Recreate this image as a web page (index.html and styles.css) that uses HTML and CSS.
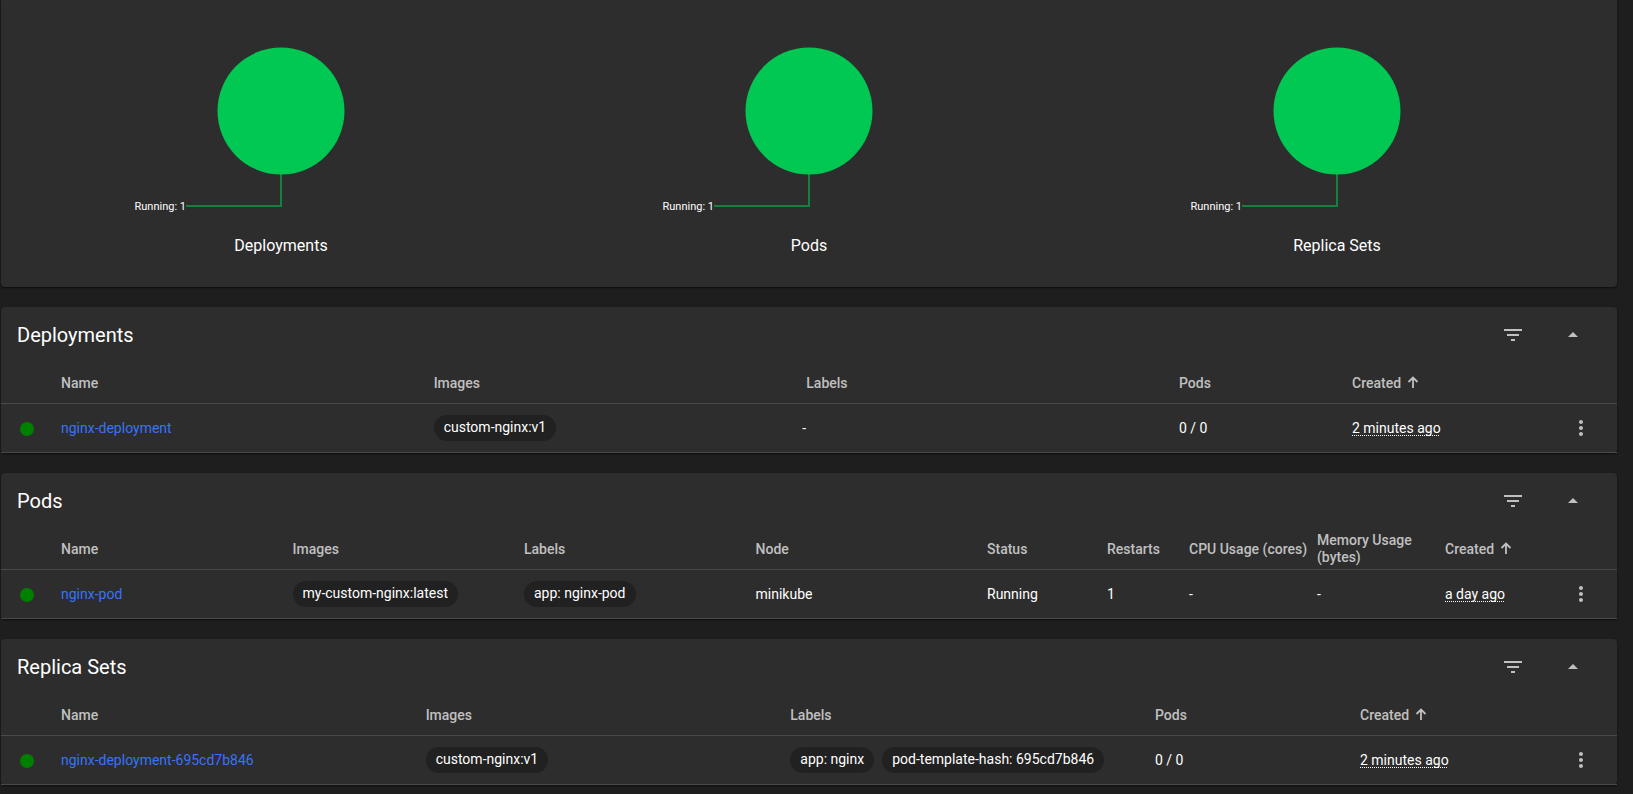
FILE: index.html
```html
<!DOCTYPE html>
<html lang="en">
<head>
<meta charset="utf-8">
<title>Workloads</title>
<link rel="stylesheet" href="styles.css">
</head>
<body>
<svg class="defs" aria-hidden="true">
  <symbol id="filter" viewBox="0 0 24 24"><path d="M10 18h4v-2h-4v2zM3 6v2h18V6H3zm3 7h12v-2H6v2z"/></symbol>
  <symbol id="up" viewBox="0 0 24 24"><path d="M7 14l5-5 5 5z"/></symbol>
  <symbol id="more" viewBox="0 0 24 24"><path d="M12 8c1.1 0 2-.9 2-2s-.9-2-2-2-2 .9-2 2 .9 2 2 2zm0 2c-1.1 0-2 .9-2 2s.9 2 2 2 2-.9 2-2-.9-2-2-2zm0 6c-1.1 0-2 .9-2 2s.9 2 2 2 2-.9 2-2-.9-2-2-2z"/></symbol>
  <symbol id="sort" viewBox="0 0 12 12"><path d="M6 12V2M1.500 6L6 1.500 10.500 6" fill="none" stroke="currentColor" stroke-width="1.800"/></symbol>
  <symbol id="dot" viewBox="0 0 24 24"><circle cx="12" cy="12" r="12"/></symbol>
  <symbol id="pie" viewBox="0 0 320 220">
    <path d="M160 170V206H65" fill="none" stroke="#16803f" stroke-width="2"/>
    <circle cx="160" cy="111" r="63.500" fill="#00c853"/>
  </symbol>
</svg>
<main class="page">
  <section class="card charts" aria-label="Workload status">
    <figure class="chart">
      <svg class="pie" viewBox="0 0 320 220"><use href="#pie"/><text x="65" y="210" text-anchor="end">Running: 1</text></svg>
      <figcaption>Deployments</figcaption>
    </figure>
    <figure class="chart">
      <svg class="pie" viewBox="0 0 320 220"><use href="#pie"/><text x="65" y="210" text-anchor="end">Running: 1</text></svg>
      <figcaption>Pods</figcaption>
    </figure>
    <figure class="chart">
      <svg class="pie" viewBox="0 0 320 220"><use href="#pie"/><text x="65" y="210" text-anchor="end">Running: 1</text></svg>
      <figcaption>Replica Sets</figcaption>
    </figure>
  </section>

  <section class="card">
    <header class="card-header">
      <h2>Deployments</h2>
      <button class="icon-button" aria-label="Filter deployments"><svg class="icon"><use href="#filter"/></svg></button>
      <button class="icon-button" aria-label="Collapse deployments"><svg class="icon"><use href="#up"/></svg></button>
    </header>
    <table class="deployments">
      <colgroup><col class="c-status"><col><col><col><col class="c-pods"><col class="c-created"><col class="c-actions"></colgroup>
      <thead><tr><th></th><th>Name</th><th>Images</th><th>Labels</th><th>Pods</th><th>Created <svg class="sort"><use href="#sort"/></svg></th><th></th></tr></thead>
      <tbody><tr>
        <td class="status"><svg class="dot"><use href="#dot"/></svg></td>
        <td><a href="#nginx-deployment">nginx-deployment</a></td>
        <td><div class="chips"><span class="chip">custom-nginx:v1</span></div></td>
        <td><div class="chips">-</div></td>
        <td>0 / 0</td>
        <td><span class="date">2 minutes ago</span></td>
        <td class="actions"><button class="menu-button" aria-label="Actions"><svg class="icon"><use href="#more"/></svg></button></td>
      </tr></tbody>
    </table>
  </section>

  <section class="card">
    <header class="card-header">
      <h2>Pods</h2>
      <button class="icon-button" aria-label="Filter pods"><svg class="icon"><use href="#filter"/></svg></button>
      <button class="icon-button" aria-label="Collapse pods"><svg class="icon"><use href="#up"/></svg></button>
    </header>
    <table class="pods">
      <colgroup><col class="c-status"><col><col><col><col><col class="c-phase"><col class="c-restarts"><col class="c-usage"><col class="c-usage"><col class="c-created"><col class="c-actions"></colgroup>
      <thead><tr><th></th><th>Name</th><th>Images</th><th>Labels</th><th>Node</th><th>Status</th><th>Restarts</th><th>CPU Usage (cores)</th><th>Memory Usage (bytes)</th><th>Created <svg class="sort"><use href="#sort"/></svg></th><th></th></tr></thead>
      <tbody><tr>
        <td class="status"><svg class="dot"><use href="#dot"/></svg></td>
        <td><a href="#nginx-pod">nginx-pod</a></td>
        <td><div class="chips"><span class="chip">my-custom-nginx:latest</span></div></td>
        <td><div class="chips"><span class="chip">app: nginx-pod</span></div></td>
        <td>minikube</td>
        <td>Running</td>
        <td>1</td>
        <td>-</td>
        <td>-</td>
        <td><span class="date">a day ago</span></td>
        <td class="actions"><button class="menu-button" aria-label="Actions"><svg class="icon"><use href="#more"/></svg></button></td>
      </tr></tbody>
    </table>
  </section>

  <section class="card">
    <header class="card-header">
      <h2>Replica Sets</h2>
      <button class="icon-button" aria-label="Filter replica sets"><svg class="icon"><use href="#filter"/></svg></button>
      <button class="icon-button" aria-label="Collapse replica sets"><svg class="icon"><use href="#up"/></svg></button>
    </header>
    <table class="replicas">
      <colgroup><col class="c-status"><col><col><col><col class="c-pods"><col class="c-created"><col class="c-actions"></colgroup>
      <thead><tr><th></th><th>Name</th><th>Images</th><th>Labels</th><th>Pods</th><th>Created <svg class="sort"><use href="#sort"/></svg></th><th></th></tr></thead>
      <tbody><tr>
        <td class="status"><svg class="dot"><use href="#dot"/></svg></td>
        <td><a href="#nginx-deployment-695cd7b846">nginx-deployment-695cd7b846</a></td>
        <td><div class="chips"><span class="chip">custom-nginx:v1</span></div></td>
        <td><div class="chips"><span class="chip">app: nginx</span><span class="chip">pod-template-hash: 695cd7b846</span></div></td>
        <td>0 / 0</td>
        <td><span class="date">2 minutes ago</span></td>
        <td class="actions"><button class="menu-button" aria-label="Actions"><svg class="icon"><use href="#more"/></svg></button></td>
      </tr></tbody>
    </table>
  </section>
</main>
</body>
</html>
```

FILE: styles.css
```css
* { box-sizing: border-box; }

body {
  margin: 0;
  background: #1e1e1e;
  color: #fff;
  font: 400 14px/17px Roboto, "Liberation Sans", sans-serif;
}

.defs { display: none; }

.page {
  display: flex;
  flex-direction: column;
  gap: 20px;
  padding: 0 16px 9px 1px;
}

.card {
  background: #2d2d2d;
  border-radius: 4px;
  box-shadow: 0 1px 2px rgba(0, 0, 0, .6);
}

.charts {
  display: grid;
  grid-template-columns: repeat(3, 1fr);
  padding: 0 16px 29px;
  border-radius: 0 0 4px 4px;
}

.chart {
  display: flex;
  flex-direction: column;
  align-items: center;
  gap: 14px;
  margin: 0;
}

.pie { width: 320px; height: 220px; }

.pie text {
  fill: #fff;
  font-size: 11px;
  font-weight: 400;
}

.chart figcaption {
  color: #fff;
  font-size: 16px;
  font-weight: 400;
  line-height: 24px;
}

.card-header {
  display: flex;
  align-items: center;
  gap: 20px;
  height: 56px;
  padding: 0 24px 0 16px;
}

h2 {
  flex: 1;
  margin: 0;
  font-size: 20px;
  font-weight: 400;
  line-height: 24px;
}

button {
  display: inline-flex;
  align-items: center;
  justify-content: center;
  padding: 0;
  border: 0;
  background: none;
  color: #c0c0c0;
  cursor: pointer;
}

.icon-button { width: 40px; height: 40px; }
.menu-button { width: 24px; height: 24px; vertical-align: middle; }
.icon { width: 24px; height: 24px; fill: currentColor; }

table {
  width: 100%;
  border-collapse: separate;
  border-spacing: 0;
  table-layout: fixed;
}

th, td {
  padding: 0;
  border-bottom: 1px solid #494949;
  text-align: left;
  vertical-align: middle;
}

th {
  height: 41px;
  color: #c0c0c0;
  font-weight: 500;
}

td { height: 49px; }

.c-status { width: 60px; }
.deployments .c-pods { width: 173px; }
.deployments .c-created { width: 173px; }
.deployments .c-actions { width: 92px; }
.pods .c-phase { width: 120px; }
.pods .c-restarts { width: 82px; }
.pods .c-usage { width: 128px; }
.pods .c-created { width: 112px; }
.pods .c-actions { width: 60px; }
.replicas .c-pods { width: 205px; }
.replicas .c-created { width: 165px; }
.replicas .c-actions { width: 92px; }

.sort { width: 12px; height: 12px; margin-left: 2px; }

.status { padding: 2px 0 0 19px; }

.dot {
  display: block;
  width: 14px;
  height: 14px;
  fill: #008000;
}

a { color: #3674fa; text-decoration: none; }

.chips { display: flex; margin: 0 -4px; }

.chip {
  margin: 0 4px;
  padding: 4px 10px 5px;
  border-radius: 13px;
  background: #212121;
  white-space: nowrap;
}

.date {
  text-decoration: underline dotted 1px;
  text-decoration-skip-ink: none;
  text-underline-offset: 2px;
}

.actions { padding-right: 24px; text-align: right; }
```
